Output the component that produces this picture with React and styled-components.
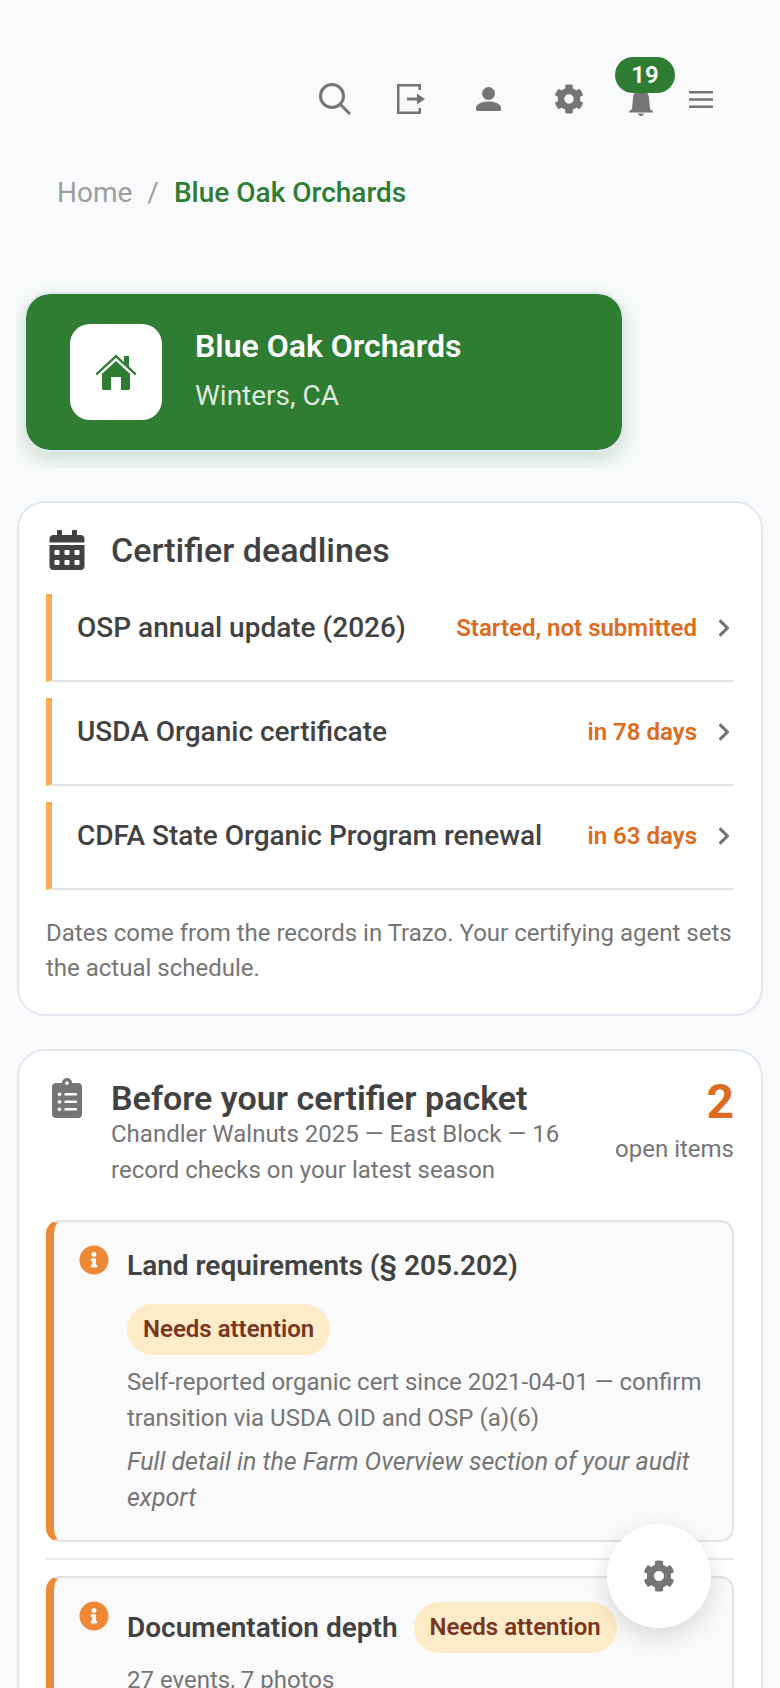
import React from 'react'
import styled, { createGlobalStyle } from 'styled-components'
import {
  FaCog,
  FaCalendarAlt,
  FaClipboardList,
  FaInfoCircle,
  FaChevronRight,
} from 'react-icons/fa'

const GREEN = '#2e7d32'
const GREY = '#757575'
const DARK = '#424242'
const ORANGE = '#dd6b20'

const GlobalStyle = createGlobalStyle`
  html, body {
    margin: 0;
    padding: 0;
    background: #f8fafc;
  }
  body {
    font-family: Roboto, "Liberation Sans", sans-serif;
    color: ${DARK};
  }
  * {
    box-sizing: border-box;
  }
`

const Page = styled.div`
  height: 100vh;
  overflow: hidden;
`

const Toolbar = styled.header`
  display: flex;
  justify-content: flex-end;
  align-items: center;
  height: 114px;
  padding: 84px 67px 0 0;
  color: ${GREY};
`

const ToolIcon = styled.span`
  display: flex;
  align-items: center;
  margin-left: ${props => props.$gap}px;
`

const BellWrap = styled(ToolIcon)`
  position: relative;
  margin-top: 8px;
`

const Badge = styled.span`
  position: absolute;
  left: -14px;
  top: -33px;
  width: 60px;
  height: 36px;
  border-radius: 18px;
  background: ${GREEN};
  color: #fff;
  font-size: 24px;
  font-weight: 600;
  line-height: 36px;
  text-align: center;
`

const Breadcrumb = styled.nav`
  display: flex;
  gap: 15px;
  margin-top: 61px;
  padding-left: 57px;
  font-size: 28px;
  line-height: 36px;
  color: #9e9e9e;
`

const Current = styled.span`
  color: ${GREEN};
  font-weight: 500;
`

const BannerClip = styled.div`
  margin: 71px 16px 0;
  padding: 10px 8px 16px;
  overflow: hidden;
`

const Banner = styled.section`
  display: flex;
  align-items: center;
  gap: 33px;
  width: 600px;
  height: 160px;
  padding: 0 44px;
  border: 2px solid #e2e8f0;
  border-radius: 26px;
  background: ${GREEN};
  background-clip: padding-box;
  box-shadow: 0 8px 20px rgba(46, 125, 50, 0.22);
`

const HomeTile = styled.div`
  display: flex;
  align-items: center;
  justify-content: center;
  width: 92px;
  height: 96px;
  border-radius: 20px;
  background: #fff;
  color: ${GREEN};
`

const BannerText = styled.div`
  padding-bottom: 4px;
`

const BannerTitle = styled.div`
  color: #fff;
  font-size: 32px;
  font-weight: 600;
  line-height: 40px;
`

const BannerSub = styled.div`
  margin-top: 12px;
  color: rgba(255, 255, 255, 0.85);
  font-size: 28px;
  line-height: 36px;
`

const Card = styled.section`
  margin: ${props => props.$top}px 17px 0;
  padding: 27px 27px 28px;
  border: 2px solid #e2e8f0;
  border-radius: 28px;
  background: #fff;
`

const CardHead = styled.div`
  display: flex;
  align-items: flex-start;
  margin-bottom: ${props => props.$bottom}px;
`

const HeadIcon = styled.span`
  display: flex;
  justify-content: center;
  flex: 0 0 42px;
  margin-right: 23px;
  color: ${props => props.$color};
`

const CardTitle = styled.h2`
  margin: 0;
  font-size: 34px;
  line-height: 40px;
  font-weight: 500;
  color: ${DARK};
`

const HeadText = styled.div`
  flex: 1;
  padding-top: 2px;
`

const PacketTitle = styled.h2`
  margin: 0;
  font-size: 34px;
  line-height: 36px;
  font-weight: 600;
  color: ${DARK};
`

const Muted = styled.div`
  font-size: 24px;
  line-height: 36px;
  color: ${GREY};
`

const Count = styled.div`
  flex: 0 0 auto;
  margin-left: 40px;
  text-align: right;
`

const CountNumber = styled.div`
  font-size: 48px;
  line-height: 48px;
  font-weight: 700;
  color: ${ORANGE};
`

const CountLabel = styled(Muted)`
  margin-top: 5px;
`

const DeadlineRow = styled.div`
  display: flex;
  align-items: flex-start;
  justify-content: space-between;
  height: 88px;
  margin-bottom: 16px;
  padding: 16px 0 0 25px;
  border-left: 6px solid #f6ad55;
  border-bottom: 2px solid #e2e2e2;
`

const DeadlineName = styled.span`
  font-size: 28px;
  line-height: 36px;
  font-weight: 500;
  color: ${DARK};
`

const DeadlineSide = styled.span`
  display: flex;
  align-items: center;
  gap: 17px;
  height: 36px;
  color: ${GREY};
`

const DeadlineStatus = styled.span`
  font-size: 24px;
  font-weight: 600;
  color: ${ORANGE};
`

const Footnote = styled(Muted)`
  margin-top: 26px;
  line-height: 35px;
`

const CheckBlock = styled.div`
  margin-bottom: 16px;
  padding-bottom: 16px;
  border-bottom: 2px solid #e8e8e8;
`

const CheckItem = styled.article`
  display: flex;
  gap: 18px;
  padding: 23px 24px 24px 25px;
  border: 2px solid #e2e2e2;
  border-left: 8px solid #ed8936;
  border-radius: 14px;
  background: #fafafa;
`

const CheckIcon = styled.span`
  flex: 0 0 30px;
  color: #ed8936;
`

const CheckBody = styled.div`
  flex: 1;
  padding-top: 1px;
`

const CheckHead = styled.div`
  display: flex;
  flex-wrap: wrap;
  align-items: center;
  gap: 18px 16px;
`

const CheckTitle = styled.h3`
  margin: 0;
  font-size: 28px;
  line-height: 40px;
  font-weight: 600;
  color: ${DARK};
`

const Pill = styled.span`
  padding: 0 16px;
  border-radius: 26px;
  background: #feebc8;
  color: #7b341e;
  font-size: 24px;
  line-height: 51px;
  font-weight: 600;
`

const CheckText = styled(Muted)`
  margin-top: 9px;
`

const CheckNote = styled(Muted)`
  margin-top: 8px;
  font-size: 25px;
  font-style: italic;
`

const Fab = styled.button`
  position: fixed;
  right: 69px;
  bottom: 60px;
  display: flex;
  align-items: center;
  justify-content: center;
  width: 104px;
  height: 104px;
  padding: 0;
  border: 0;
  border-radius: 50%;
  background: #fff;
  color: ${GREY};
  box-shadow: 0 8px 24px rgba(0, 0, 0, 0.14);
`

// hand-drawn glyphs the icon packages don't have in this shape
const SearchIcon = () => (
  <svg width="32" height="32" viewBox="0 0 32 32" fill="none" stroke="currentColor" strokeWidth="3">
    <circle cx="13" cy="13" r="11.5" />
    <path d="M21.5 21.5 L31 31" />
  </svg>
)

const SignOutIcon = () => (
  <svg width="28" height="30" viewBox="0 0 28 30" fill="currentColor">
    <path d="M0 0H24V6H21.5V2.5H2.5V27.5H21.5V24H24V30H0Z" />
    <path d="M10 13.5H20V9.5L28 15L20 20.5V16.5H10Z" />
  </svg>
)

const PersonIcon = () => (
  <svg width="25" height="24" viewBox="0 0 25 24" fill="currentColor">
    <circle cx="12.5" cy="6.5" r="6.5" />
    <path d="M0 21C0 17 6 14.5 12.5 14.5S25 17 25 21V22.5C25 23.3 24.3 24 23.5 24H1.5C0.7 24 0 23.3 0 22.5Z" />
  </svg>
)

const BellIcon = () => (
  <svg width="24" height="26" viewBox="0 0 24 26" fill="currentColor">
    <path d="M3 19L4 8C4 3 8 0 12 0S20 3 20 8L21 19L24 21.5V22.5H0V21.5Z" />
    <path d="M8.5 23.5H15.5L13 26H11Z" />
  </svg>
)

const MenuIcon = () => (
  <svg width="24" height="17" viewBox="0 0 24 17" stroke="currentColor" strokeWidth="2.6">
    <path d="M0 1.3H24M0 8.5H24M0 15.7H24" />
  </svg>
)

const HouseIcon = () => (
  <svg width="42" height="36" viewBox="0 0 42 36" fill="currentColor">
    <path d="M0.5 19.5L21 0.5L29 8V2H34V12.6L41.5 19.5L40 21.2L21 3.8L2 21.2Z" />
    <path d="M21 7L35 19.8V34.5C35 35.3 34.3 36 33.5 36H26V23H16V36H8.5C7.7 36 7 35.3 7 34.5V19.8Z" />
  </svg>
)

const deadlines = [
  { name: 'OSP annual update (2026)', status: 'Started, not submitted' },
  { name: 'USDA Organic certificate', status: 'in 78 days' },
  { name: 'CDFA State Organic Program renewal', status: 'in 63 days' },
]

function App() {
  return (
    <Page>
      <GlobalStyle />
      <Toolbar>
        <ToolIcon $gap={0}><SearchIcon /></ToolIcon>
        <ToolIcon $gap={46}><SignOutIcon /></ToolIcon>
        <ToolIcon $gap={51}><PersonIcon /></ToolIcon>
        <ToolIcon $gap={53}><FaCog size={30} /></ToolIcon>
        <BellWrap $gap={45}>
          <BellIcon />
          <Badge>19</Badge>
        </BellWrap>
        <ToolIcon $gap={36}><MenuIcon /></ToolIcon>
      </Toolbar>

      <Breadcrumb>
        <span>Home</span>
        <span>/</span>
        <Current>Blue Oak Orchards</Current>
      </Breadcrumb>

      <BannerClip>
        <Banner>
          <HomeTile><HouseIcon /></HomeTile>
          <BannerText>
            <BannerTitle>Blue Oak Orchards</BannerTitle>
            <BannerSub>Winters, CA</BannerSub>
          </BannerText>
        </Banner>
      </BannerClip>

      <Card $top={33}>
        <CardHead $bottom={24}>
          <HeadIcon $color={DARK}><FaCalendarAlt size={40} /></HeadIcon>
          <CardTitle>Certifier deadlines</CardTitle>
        </CardHead>
        {deadlines.map(item => (
          <DeadlineRow key={item.name}>
            <DeadlineName>{item.name}</DeadlineName>
            <DeadlineSide>
              <DeadlineStatus>{item.status}</DeadlineStatus>
              <FaChevronRight size={20} />
            </DeadlineSide>
          </DeadlineRow>
        ))}
        <Footnote>
          Dates come from the records in Trazo. Your certifying agent sets the actual schedule.
        </Footnote>
      </Card>

      <Card $top={33}>
        <CardHead $bottom={32}>
          <HeadIcon $color={GREY}><FaClipboardList size={40} /></HeadIcon>
          <HeadText>
            <PacketTitle>Before your certifier packet</PacketTitle>
            <Muted>Chandler Walnuts 2025 — East Block — 16 record checks on your latest season</Muted>
          </HeadText>
          <Count>
            <CountNumber>2</CountNumber>
            <CountLabel>open items</CountLabel>
          </Count>
        </CardHead>

        <CheckBlock>
          <CheckItem>
            <CheckIcon><FaInfoCircle size={30} /></CheckIcon>
            <CheckBody>
              <CheckHead>
                <CheckTitle>Land requirements (§ 205.202)</CheckTitle>
                <Pill>Needs attention</Pill>
              </CheckHead>
              <CheckText>
                Self-reported organic cert since 2021-04-01 — confirm transition via USDA OID and OSP (a)(6)
              </CheckText>
              <CheckNote>Full detail in the Farm Overview section of your audit export</CheckNote>
            </CheckBody>
          </CheckItem>
        </CheckBlock>

        <CheckItem>
          <CheckIcon><FaInfoCircle size={30} /></CheckIcon>
          <CheckBody>
            <CheckHead>
              <CheckTitle>Documentation depth</CheckTitle>
              <Pill>Needs attention</Pill>
            </CheckHead>
            <CheckText>27 events, 7 photos</CheckText>
          </CheckBody>
        </CheckItem>
      </Card>

      <Fab aria-label="Settings"><FaCog size={32} /></Fab>
    </Page>
  )
}

export default App
